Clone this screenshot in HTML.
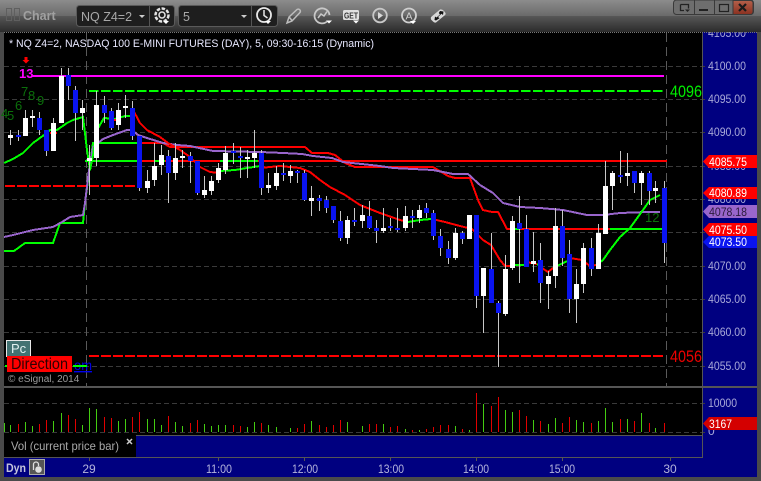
<!DOCTYPE html>
<html><head><meta charset="utf-8"><style>
html,body{margin:0;padding:0;background:#000;width:761px;height:481px;overflow:hidden}
svg{display:block}
text{font-family:"Liberation Sans",sans-serif}
</style></head><body>
<svg width="761" height="481" viewBox="0 0 761 481" xmlns="http://www.w3.org/2000/svg">
<defs>
<linearGradient id="t1" x1="0" y1="0" x2="0" y2="1"><stop offset="0" stop-color="#8c8c8c"/><stop offset="1" stop-color="#6a6a6a"/></linearGradient>
<linearGradient id="t2" x1="0" y1="0" x2="0" y2="1"><stop offset="0" stop-color="#575757"/><stop offset="1" stop-color="#2b2b2b"/></linearGradient>
<linearGradient id="cl" x1="0" y1="0" x2="0" y2="1"><stop offset="0" stop-color="#b5604a"/><stop offset="1" stop-color="#8a3020"/></linearGradient>
</defs>
<rect width="761" height="481" fill="#4a4a4a"/>
<rect x="4" y="32" width="753" height="445" fill="#000"/>
<!-- axis fill -->
<rect x="703" y="32" width="54" height="426" fill="#000080"/>
<rect x="136" y="436" width="566" height="21" fill="#000080"/>
<rect x="4" y="458" width="753" height="19" fill="#000080"/>
<!-- grid -->
<g stroke="#3a3a3a" stroke-width="1" stroke-dasharray="5 3" shape-rendering="crispEdges" fill="none">
<path d="M4 66.500H705M4 99.500H705M4 132.500H705M4 166.500H705M4 199.500H705M4 232.500H705M4 266.500H705M4 299.500H705M4 332.500H705M4 366.500H705M4 403.500H705M4 432.500H705"/>
</g>
<g stroke="#5a5a5a" stroke-width="1" stroke-dasharray="9 5" shape-rendering="crispEdges" fill="none">
<path d="M86.500 33V386M666.500 33V386"/>
</g>
<!-- horizontals -->
<g fill="none" stroke-width="2" shape-rendering="crispEdges">
<path d="M32 76H664" stroke="#ff00ff"/>
<path d="M89 91H663" stroke="#00ff00" stroke-dasharray="9.500 2.500"/>
<path d="M5 186H140" stroke="#ff0000" stroke-dasharray="10 2"/>
<path d="M89 356H663" stroke="#ff0000" stroke-dasharray="10 2"/>
<path d="M85 161H260" stroke="#00ff00"/>
<path d="M140 161H667" stroke="#ff0000"/>
<path d="M155 161H165" stroke="#00ff00"/>
<path d="M220 161H258" stroke="#00ff00"/>
<path d="M4 251H14L25 243H53L60 223H83L85 203L89 173L93 143H137" stroke="#00ff00"/>
<path d="M137 143H163L170 147H305L312 153H328L335 155L345 163L355 167H433L448 176L455 178H470L478 200L483 210L492 212H498L507 229H610" stroke="#ff0000"/>
<path d="M610 229H662" stroke="#00ff00"/>
<path d="M514 229H520" stroke="#00ff00"/>
<path d="M4 237L13 235L33 230L53 227L62 222L70 217L83 215L85 203L89 170L93 147L103 139L113 135L127 130L132 130L138 135L147 138L163 143L177 145L190 146L213 151L260 152L283 153L302 154L313 156L332 158L343 162L380 166L393 168L433 170L453 174L468 174L480 185L493 193L503 203L520 207L540 208L563 210L587 215L603 215L620 213L647 212L660 212" stroke="#9966cc"/>
<path d="M4 163L13 159L23 153L33 143L44 135L50 130L57 130L67 123L73 120L83 117L87 150L90 170L93 155L97 130L104 118L115 119L125 116L132 116" stroke="#00ff00"/>
<path d="M50 133H57" stroke="#ff0000"/>
<path d="M110 120H118" stroke="#ff0000"/>
<path d="M132 108L140 123L147 130L160 137L168 143L180 150L190 157L200 167L210 172L220 173" stroke="#ff0000"/>
<path d="M220 171L235 170L247 168L260 166" stroke="#00ff00"/>
<path d="M260 168L280 166L300 168L310 172L320 180L330 187L345 195L360 205L380 213L400 220L408 222" stroke="#ff0000"/>
<path d="M408 222L420 220L431 219" stroke="#00ff00"/>
<path d="M432 219L445 222L460 226L472 229L483 240L491 245L500 260L505 266L512 266" stroke="#ff0000"/>
<path d="M514 265H526" stroke="#00ff00"/>
<path d="M526 262L537 264" stroke="#ff0000"/>
<path d="M537 264L542 267" stroke="#00ff00"/>
<path d="M542 268L548 272L553 268" stroke="#ff0000"/>
<path d="M553 268L563 263L570 260" stroke="#00ff00"/>
<path d="M570 258L582 260L590 266L596 265" stroke="#ff0000"/>
<path d="M596 265L603 260L610 250L620 237L630 228L643 210L650 200L660 195" stroke="#00ff00"/>
</g>
<!-- wicks -->
<path shape-rendering="crispEdges" fill="none" stroke="#c8c8c8" stroke-width="1" d="M10.500 130V145M18.500 130V141M25.500 110V136M32.500 110V127M39.500 112V135M46.500 130V156M53.500 118V151M61.500 68V123M68.500 68V100M75.500 86V141M82.500 100V130M89.500 145V195M96.500 91V166M104.500 96V123M111.500 108V130M118.500 103V130M125.500 95V118M132.500 101V140M139.500 136V191M147.500 170V193M154.500 143V186M161.500 145V175M168.500 150V203M175.500 143V180M182.500 150V168M190.500 152V183M197.500 161V195M204.500 176V198M211.500 176V195M218.500 163V183M225.500 146V174M233.500 143V164M240.500 147V178M247.500 150V178M254.500 130V168M261.500 150V195M268.500 173V193M276.500 166V190M283.500 163V181M290.500 165V183M297.500 170V183M304.500 170V201M311.500 186V216M319.500 195V211M326.500 196V213M333.500 211V223M340.500 211V241M347.500 216V244M354.500 208V226M362.500 205V228M369.500 201V229M376.500 220V243M383.500 208V233M390.500 218V231M397.500 208V232M405.500 206V231M412.500 210V228M419.500 205V223M426.500 203V218M433.500 210V240M440.500 229V256M448.500 241V264M455.500 228V260M462.500 231V244M469.500 215V239M476.500 215V308M483.500 268V333M491.500 233V303M498.500 301V367M505.500 255V316M512.500 216V270M519.500 196V283M526.500 215V267M533.500 232V272M540.500 243V303M548.500 271V309M555.500 208V288M562.500 210V266M569.500 240V313M576.500 269V323M583.500 243V293M591.500 238V276M598.500 224V269M605.500 161V234M612.500 171V210M620.500 151V183M627.500 153V186M634.500 171V193M641.500 171V205M649.500 171V205M655.500 181V203M664.500 181V263"/>
<!-- white bodies -->
<path shape-rendering="crispEdges" fill="none" stroke="#ffffff" stroke-width="5" d="M10.500 135V138M25.500 118V136M32.500 116V118M53.500 123V151M61.500 76V123M82.500 108V113M89.500 158V161M96.500 105V158M118.500 110V125M125.500 106V108M147.500 181V188M154.500 166V180M161.500 155V165M175.500 158V173M182.500 156V158M204.500 190V195M211.500 181V191M218.500 168V180M225.500 153V170M247.500 157V159M254.500 153V158M268.500 185V188M276.500 173V186M290.500 171V176M311.500 198V201M347.500 220V238M362.500 215V221M383.500 228V231M405.500 216V228M419.500 210V218M455.500 233V258M469.500 215V239M483.500 268V296M505.500 269V314M512.500 221V268M533.500 261V264M548.500 276V284M555.500 226V276M576.500 284V299M583.500 248V284M598.500 233V269M605.500 186V234M612.500 173V186M627.500 173V176M641.500 173V183M655.500 188V191"/>
<!-- blue bodies -->
<path shape-rendering="crispEdges" fill="none" stroke="#0a14f0" stroke-width="5" d="M18.500 135V137M39.500 118V130M46.500 130V151M68.500 75V86M75.500 90V113M104.500 105V113M111.500 111V128M132.500 108V136M139.500 136V188M168.500 156V173M190.500 156V161M197.500 161V193M233.500 151V153M240.500 156V158M261.500 153V188M283.500 173V175M297.500 171V173M304.500 173V200M319.500 198V201M326.500 200V208M333.500 206V220M340.500 221V238M354.500 220V222M369.500 216V228M376.500 228V231M390.500 226V228M397.500 228V230M412.500 216V218M426.500 208V213M433.500 213V236M440.500 236V248M448.500 249V258M462.500 233V239M476.500 215V296M491.500 269V303M498.500 303V313M519.500 223V229M526.500 229V267M540.500 260V283M562.500 226V258M569.500 254V299M591.500 248V269M620.500 175V177M634.500 171V183M649.500 173V191M664.500 188V243"/>
<!-- indicators text -->
<g font-size="13" fill="#0b700b">
<text x="1" y="118">4</text><text x="7" y="120">5</text><text x="15" y="110">6</text><text x="21" y="96">7</text><text x="28" y="100">8</text><text x="37" y="105">9</text>
<text x="645" y="222">12</text>
</g>
<text x="19" y="78" font-size="13" font-weight="bold" fill="#ff00ff">13</text>
<path d="M24.500 57H27.500V60H29.500L26 63.500L22.500 60H24.500Z" fill="#ff0000"/>
<text x="670" y="97" font-size="16.500" fill="#00ee00" textLength="32" lengthAdjust="spacingAndGlyphs">4096</text>
<text x="670" y="362" font-size="16.500" fill="#ee0000" textLength="32" lengthAdjust="spacingAndGlyphs">4056</text>
<text x="9" y="47" font-size="11" fill="#e8e8ff" textLength="365" lengthAdjust="spacingAndGlyphs">* NQ Z4=2, NASDAQ 100 E-MINI FUTURES (DAY), 5, 09:30-16:15 (Dynamic)</text>
<!-- Pc / direction -->
<rect x="6.500" y="340.500" width="24" height="16" fill="#427272" stroke="#e8e8e8" stroke-width="1"/>
<text x="11" y="353" font-size="13" fill="#e0f0f0">Pc</text>
<text x="74" y="370" font-size="14" fill="#0000ee" text-decoration="underline" textLength="18" lengthAdjust="spacingAndGlyphs">om</text>
<rect x="73" y="365" width="14" height="2" fill="#00ff00"/>
<rect x="5" y="365" width="2" height="2" fill="#00ff00"/>
<rect x="7" y="356" width="65" height="16" fill="#ff0000"/>
<text x="11" y="369" font-size="15.500" fill="#300000" textLength="57" lengthAdjust="spacingAndGlyphs">Direction</text>
<text x="8" y="382" font-size="10" fill="#9a9a9a">© eSignal, 2014</text>
<!-- volume -->
<path shape-rendering="crispEdges" fill="none" stroke="#44cc11" stroke-width="1" d="M4.500 432V423M10.500 432V425M25.500 432V422M32.500 432V426M53.500 432V421M61.500 432V413M82.500 432V425M89.500 432V408M96.500 432V409M118.500 432V421M125.500 432V419M147.500 432V419M154.500 432V419M161.500 432V425M175.500 432V422M182.500 432V426M204.500 432V424M211.500 432V426M218.500 432V425M225.500 432V425M247.500 432V427M254.500 432V422M268.500 432V425M276.500 432V427M290.500 432V428M311.500 432V421M347.500 432V422M362.500 432V426M383.500 432V424M405.500 432V429M419.500 432V430M455.500 432V426M469.500 432V430M483.500 432V404M505.500 432V410M512.500 432V412M533.500 432V420M548.500 432V424M555.500 432V418M576.500 432V420M583.500 432V422M598.500 432V421M605.500 432V408M612.500 432V422M627.500 432V419M641.500 432V413M655.500 432V428"/>
<path shape-rendering="crispEdges" fill="none" stroke="#e00000" stroke-width="1" d="M18.500 432V424M39.500 432V424M46.500 432V420M68.500 432V415M75.500 432V419M104.500 432V417M111.500 432V418M132.500 432V417M139.500 432V412M168.500 432V416M190.500 432V423M197.500 432V420M233.500 432V425M240.500 432V426M261.500 432V423M297.500 432V428M304.500 432V424M319.500 432V425M326.500 432V427M333.500 432V425M340.500 432V420M369.500 432V424M376.500 432V424M390.500 432V427M397.500 432V426M412.500 432V430M426.500 432V429M433.500 432V427M440.500 432V425M448.500 432V425M462.500 432V429M476.500 432V393M491.500 432V406M498.500 432V397M519.500 432V410M526.500 432V416M540.500 432V421M562.500 432V423M569.500 432V417M591.500 432V423M620.500 432V419M634.500 432V421M649.500 432V423M664.500 432V423"/>
<!-- panel lines -->
<g shape-rendering="crispEdges" fill="#555">
<rect x="4" y="386" width="753" height="2"/>
<rect x="702" y="32" width="1" height="426"/>
<rect x="136" y="435" width="567" height="1"/>
<rect x="4" y="457" width="699" height="1"/>
<rect x="89" y="458" width="1" height="3"/><rect x="218" y="458" width="1" height="3"/><rect x="304" y="458" width="1" height="3"/><rect x="390" y="458" width="1" height="3"/><rect x="476" y="458" width="1" height="3"/><rect x="562" y="458" width="1" height="3"/><rect x="670" y="458" width="1" height="3"/>
</g>
<text x="11" y="450" font-size="12" fill="#aaaaaa" textLength="108" lengthAdjust="spacingAndGlyphs">Vol (current price bar)</text>
<path d="M127 439L132 444M132 439L127 444" stroke="#cccccc" stroke-width="1.500"/>
<!-- axis labels -->
<g font-size="12" fill="#a8a8d8">
<text x="708" y="37" textLength="38" lengthAdjust="spacingAndGlyphs">4105.00</text><text x="708" y="70" textLength="38" lengthAdjust="spacingAndGlyphs">4100.00</text><text x="708" y="103" textLength="38" lengthAdjust="spacingAndGlyphs">4095.00</text><text x="708" y="136" textLength="38" lengthAdjust="spacingAndGlyphs">4090.00</text><text x="708" y="170" textLength="38" lengthAdjust="spacingAndGlyphs">4085.00</text><text x="708" y="203" textLength="38" lengthAdjust="spacingAndGlyphs">4080.00</text><text x="708" y="270" textLength="38" lengthAdjust="spacingAndGlyphs">4070.00</text><text x="708" y="303" textLength="38" lengthAdjust="spacingAndGlyphs">4065.00</text><text x="708" y="336" textLength="38" lengthAdjust="spacingAndGlyphs">4060.00</text><text x="708" y="370" textLength="38" lengthAdjust="spacingAndGlyphs">4055.00</text><text x="708" y="407" textLength="29" lengthAdjust="spacingAndGlyphs">10000</text><text x="708" y="435">0</text>
</g>
<!-- tags -->
<g font-size="12" fill="#fff">
<path d="M703 161.500L709 155H757V168H709Z" fill="#ff0000"/><text x="709" y="166" textLength="38" lengthAdjust="spacingAndGlyphs">4085.75</text>
<path d="M703 193L709 187H757V199H709Z" fill="#ff0000"/><text x="709" y="197" textLength="38" lengthAdjust="spacingAndGlyphs">4080.89</text>
<path d="M703 211.500L709 205H757V218H709Z" fill="#9966cc"/><text x="709" y="216" fill="#2a1a3a" textLength="38" lengthAdjust="spacingAndGlyphs">4078.18</text>
<path d="M703 229.500L709 223H757V236H709Z" fill="#ff0000"/><text x="709" y="234" textLength="38" lengthAdjust="spacingAndGlyphs">4075.50</text>
<path d="M703 242L709 236H757V248H709Z" fill="#0a14f0"/><text x="709" y="246" textLength="38" lengthAdjust="spacingAndGlyphs">4073.50</text>
<path d="M703 423.500L709 417H757V430H709Z" fill="#d40000"/><text x="709" y="428" textLength="23" lengthAdjust="spacingAndGlyphs">3167</text>
</g>
<!-- time labels -->
<g font-size="12" fill="#b4b4dc" text-anchor="middle">
<text x="89" y="473">29</text><text x="219" y="473" textLength="26" lengthAdjust="spacingAndGlyphs">11:00</text><text x="305" y="473" textLength="26" lengthAdjust="spacingAndGlyphs">12:00</text><text x="391" y="473" textLength="26" lengthAdjust="spacingAndGlyphs">13:00</text><text x="476" y="473" textLength="26" lengthAdjust="spacingAndGlyphs">14:00</text><text x="562" y="473" textLength="26" lengthAdjust="spacingAndGlyphs">15:00</text><text x="670" y="473">30</text>
</g>
<text x="6" y="472" font-size="12" font-weight="bold" fill="#c4c4dc" textLength="20" lengthAdjust="spacingAndGlyphs">Dyn</text>
<rect x="29.500" y="459.500" width="15" height="15" fill="#555" stroke="#aaa"/>
<path d="M33.500 470V464.500A2.500 2.500 0 0 1 38.500 464.500V466" fill="none" stroke="#ddd" stroke-width="1.300"/>
<circle cx="38.500" cy="469.500" r="3.300" fill="#ddd"/>
<!-- top band -->
<rect width="761" height="16" fill="url(#t1)"/>
<rect y="16" width="761" height="16" fill="url(#t2)"/>
<path d="M4 32.500H757" stroke="#777" stroke-width="1" stroke-dasharray="1 1" shape-rendering="crispEdges"/>
<rect x="6.500" y="8.500" width="5" height="12" fill="none" stroke="#5f5f5f"/>
<rect x="14.500" y="8.500" width="5" height="12" fill="none" stroke="#5f5f5f"/>
<text x="23" y="20" font-size="12.500" font-weight="bold" fill="#a0a0a0">Chart</text>
<!-- combos -->
<rect x="76.500" y="5.500" width="98" height="21" rx="3" fill="#1e1e1e" stroke="#5a5a5a"/>
<path d="M149.500 6V26" stroke="#555"/>
<text x="81" y="21" font-size="12.500" fill="#a8a8a8">NQ Z4=2</text>
<path d="M139 15H145L142 18Z" fill="#ccc"/>
<rect x="178.500" y="5.500" width="99" height="21" rx="3" fill="#1e1e1e" stroke="#5a5a5a"/>
<path d="M251.500 6V26" stroke="#555"/>
<text x="183" y="21" font-size="12.500" fill="#a8a8a8">5</text>
<path d="M241 15H247L244 18Z" fill="#ccc"/>
<!-- gear -->
<circle cx="162" cy="15" r="6.500" fill="none" stroke="#e4e4e4" stroke-width="2.500" stroke-dasharray="3.500 1.500"/>
<circle cx="162" cy="15" r="3" fill="none" stroke="#e4e4e4" stroke-width="1.500"/>
<path d="M163 21H169L166 24Z" fill="#fff"/>
<!-- clock -->
<circle cx="264" cy="15" r="7" fill="none" stroke="#e8e8e8" stroke-width="1.800"/>
<path d="M264 10V15.500L267.500 18" fill="none" stroke="#e8e8e8" stroke-width="1.500"/>
<path d="M265 21H271L268 24Z" fill="#fff"/>
<!-- pencil -->
<path d="M287 23L289 17L297 9.500Q299 8.500 300 10Q301 11.500 299.500 13L292 21L287 23ZM289.500 17.500L292 20.500" fill="none" stroke="#bdbdbd" stroke-width="1.500"/>
<!-- chart circle -->
<path d="M327 21.500A7.500 7.500 0 1 1 329.500 15" fill="none" stroke="#c8c8c8" stroke-width="1.800"/>
<path d="M318 18L321 14L324 16L327 11.500" fill="none" stroke="#c8c8c8" stroke-width="1.500"/>
<path d="M326 20.500H332L329 23.500Z" fill="#fff"/>
<!-- GET -->
<rect x="343" y="10" width="16" height="10" rx="1.500" fill="#e0e0e0"/>
<text x="344" y="18.500" font-size="8" font-weight="bold" fill="#333" textLength="14" lengthAdjust="spacingAndGlyphs">GET</text>
<path d="M353 20.500H359L356 23.500Z" fill="#fff"/>
<!-- play -->
<circle cx="380" cy="15.500" r="6.800" fill="none" stroke="#c8c8c8" stroke-width="1.800"/>
<path d="M378 12V19L383 15.500Z" fill="#d8d8d8"/>
<!-- A circle -->
<circle cx="409" cy="15.500" r="7" fill="none" stroke="#d0d0d0" stroke-width="1.800"/>
<text x="405.500" y="19.500" font-size="10.500" fill="#d0d0d0">A</text>
<path d="M410 21H416L413 24Z" fill="#fff"/>
<!-- diamond -->
<path d="M431 17L440 9.500Q442 9 444 11L445.500 13Q446 14.500 444.500 15.500L436 22.500Q434.500 23 433 21.500L431 19.500Q430.500 18 431 17Z" fill="#d8d8d8"/>
<path d="M440 11L443.500 11.500L443 15L441.500 13.800L438 17L439.500 18.200L436 20.500L434.500 20L435 16.500L436.500 17.500L440 14.500L438.800 13Z" fill="#111"/>
<!-- window buttons -->
<rect x="673.500" y="0" width="80" height="14.500" rx="3" fill="#6e6e6e" stroke="#3a3a3a"/>
<path d="M733 0.500H750Q753 0.500 753 3V11.500Q753 14.500 750 14.500H733Z" fill="url(#cl)" stroke="#3a3a3a"/>
<path d="M694.500 0V14M714.500 0V14" stroke="#3a3a3a"/>
<path d="M680.500 4.500H688.500V8.500M680.500 4.500V10.500H684" fill="none" stroke="#222" stroke-width="1.300"/>
<path d="M685 9.500H690L687.500 12Z" fill="#222"/>
<rect x="699" y="9" width="9" height="2" fill="#222"/>
<rect x="719.500" y="4.500" width="9" height="7" fill="none" stroke="#222" stroke-width="1.200"/>
<path d="M739 4L746 11M746 4L739 11" stroke="#1a1a1a" stroke-width="2.200"/>
</svg>
</body></html>
